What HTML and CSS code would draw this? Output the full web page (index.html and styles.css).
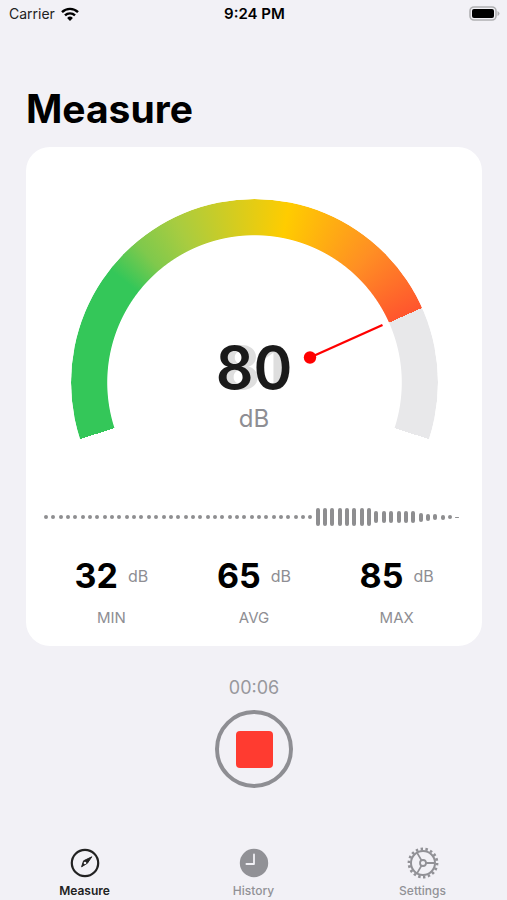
FILE: index.html
```html
<!DOCTYPE html>
<html lang="en">
<head>
<meta charset="UTF-8">
<meta name="viewport" content="width=device-width, initial-scale=1.0">
<title>Measure</title>
<link rel="stylesheet" href="styles.css">
</head>
<body>

<!-- Status bar -->
<div class="status-bar">
    <div class="carrier">
        <span>Carrier</span>
        <svg width="18" height="14" viewBox="0 0 18 14" aria-hidden="true">
            <g fill="none" stroke="#000" stroke-width="2.4">
                <path d="M1 5.2 A11.3 11.3 0 0 1 17 5.2"/>
                <path d="M4 8.4 A7.1 7.1 0 0 1 14 8.4"/>
            </g>
            <path d="M9 14 L6.1 11 A4.1 4.1 0 0 1 11.9 11 Z"/>
        </svg>
    </div>
    <div class="clock">9:24 PM</div>
    <svg class="battery" width="31" height="15" viewBox="0 0 31 15" aria-hidden="true">
        <rect x="1" y="1" width="26" height="13" rx="4" fill="none" stroke="#b0b0b2" stroke-width="1.6"/>
        <rect x="3" y="3" width="22" height="9" rx="2"/>
        <path d="M28.5 5 Q30.5 6 30.5 7.5 Q30.5 9 28.5 10 Z" fill="#b0b0b2"/>
    </svg>
</div>

<main class="container">
    <h1>Measure</h1>

    <section class="card">
        <div class="gauge">
            <div class="gauge-arc"></div>
            <svg class="needle" viewBox="0 0 367 241" aria-hidden="true">
                <path d="M239 158.5 L311.5 126" stroke="#f00" stroke-width="2.4"/>
                <circle cx="239" cy="158.5" r="6.2" fill="#f00"/>
            </svg>
            <div class="reading">
                <div class="level"><span class="level-old" aria-hidden="true"></span>80</div>
                <div class="level-unit">dB</div>
            </div>
        </div>

        <div class="wave" id="wave"></div>

        <div class="stats">
            <div class="stat">
                <div class="stat-value">32 <small>dB</small></div>
                <div class="stat-label">MIN</div>
            </div>
            <div class="stat">
                <div class="stat-value">65 <small>dB</small></div>
                <div class="stat-label">AVG</div>
            </div>
            <div class="stat">
                <div class="stat-value">85 <small>dB</small></div>
                <div class="stat-label">MAX</div>
            </div>
        </div>
    </section>

    <div class="timer">00:06</div>
    <button class="stop-button" type="button" aria-label="Stop"><span></span></button>
</main>

<!-- Tabs -->
<nav class="tab-bar">
    <a class="tab active" href="#measure">
        <svg width="32" height="32" viewBox="0 0 32 32" fill="none" stroke="currentColor" aria-hidden="true">
            <circle cx="16" cy="16" r="13.2" stroke-width="2.2"/>
            <path d="M22.8 9.8 L18.4 16.2 L12.6 19.8 L14.6 13.8 Z" fill="currentColor" stroke-width="1" stroke-linejoin="round"/>
            <circle cx="16" cy="16" r="1.3" fill="#f2f1f6" stroke="none"/>
        </svg>
        <span>Measure</span>
    </a>
    <a class="tab" href="#history">
        <svg width="32" height="32" viewBox="0 0 32 32" aria-hidden="true">
            <circle cx="16" cy="16" r="14.2" fill="currentColor"/>
            <path d="M16 7.4 V17 H8.4" fill="none" stroke="#f2f1f6" stroke-width="1.8" stroke-linecap="round" stroke-linejoin="round"/>
        </svg>
        <span>History</span>
    </a>
    <a class="tab" href="#settings">
        <svg width="32" height="32" viewBox="0 0 32 32" fill="none" stroke="currentColor" aria-hidden="true">
            <circle cx="16" cy="16" r="12" stroke-width="2"/>
            <circle cx="16" cy="16" r="14" stroke-width="2.8" pathLength="36" stroke-dasharray="1 1"/>
            <circle cx="16" cy="16" r="3" stroke-width="1.8"/>
            <path d="M19 16 H28 M14.5 13.4 L10 5.6 M14.5 18.6 L10 26.4" stroke-width="1.8"/>
        </svg>
        <span>Settings</span>
    </a>
</nav>

<script>
// Bar heights, oldest sample first
var levels = [];
for (var i = 0; i < 37; i++) {
    levels.push(4);
}
levels = levels.concat([18, 18, 18, 18, 18, 18, 18, 18, 12, 12, 12, 12, 12, 12, 9, 7, 6, 5, 4, 1]);

// Draw the waveform
var wave = document.getElementById('wave');
levels.forEach(function(level) {
    var bar = document.createElement('span');
    bar.style.height = level + 'px';
    wave.appendChild(bar);
});
</script>

</body>
</html>
```
FILE: styles.css
```css
* {
    box-sizing: border-box;
}

body {
    margin: 0;
    min-height: 100vh;
    display: flex;
    flex-direction: column;
    background-color: #f2f1f6;
    color: #000;
    font-family: Inter, "Liberation Sans", sans-serif;
}

/* Status bar */
.status-bar {
    display: grid;
    grid-template-columns: 1fr auto 1fr;
    align-items: center;
    height: 27px;
    padding: 0 7px 0 9px;
    font-size: 14px;
}

.carrier {
    display: flex;
    align-items: center;
    gap: 6px;
    color: #222;
}

.clock {
    font-size: 15px;
    font-weight: 600;
}

.battery {
    justify-self: end;
}

/* Main content */
.container {
    flex: 1;
    display: flex;
    flex-direction: column;
    padding: 57px 25px 0 26px;
}

h1 {
    margin: 0 0 13px;
    font-size: 39px;
    line-height: 50px;
    font-weight: 700;
}

.card {
    padding: 52px 14px 18px;
    border-radius: 24px;
    background-color: #fff;
}

/* Gauge */
.gauge {
    display: grid;
    grid-template-rows: 100%;
    width: 367px;
    max-width: 100%;
    aspect-ratio: 367 / 241;
    margin: 0 auto;
    overflow: hidden;
}

.gauge > * {
    grid-area: 1 / 1;
}

.gauge-arc {
    aspect-ratio: 1;
    align-self: start;
    border-radius: 50%;
    background: conic-gradient(from 252deg, #34c759 56deg, #7fc94c 68deg, #a8cc40 82deg, #ffcc00 119deg, #ff8e24 150deg, #ff552e 174deg, #e8e8ea 174deg 216deg, transparent 216deg);
    -webkit-mask: radial-gradient(closest-side, transparent 80%, #000 80.5%);
    mask: radial-gradient(closest-side, transparent 80%, #000 80.5%);
}

.needle {
    width: 100%;
}

.reading {
    align-self: end;
    text-align: center;
    z-index: 1;
}

.level {
    position: relative;
    color: #1a1a1a;
    font-size: 59px;
    line-height: 64px;
    font-weight: 600;
}

/* Previous value fading out behind the current one */
.level-old {
    position: absolute;
    inset: 0;
    z-index: -1;
    color: #dedede;
}

.level-old::before {
    content: "81";
}

.level-unit {
    padding: 4px 0 6px;
    color: #8e8e93;
    font-size: 24px;
    line-height: 30px;
}

/* Waveform */
.wave {
    display: flex;
    align-items: center;
    justify-content: space-between;
    height: 18px;
    margin: 68px 8px 0 4px;
}

.wave span {
    width: 4px;
    border-radius: 2px;
    background-color: #8e8e90;
}

/* Min, average and max */
.stats {
    display: grid;
    grid-template-columns: repeat(3, 1fr);
    margin-top: 30px;
    text-align: center;
}

.stat-value {
    display: flex;
    align-items: center;
    justify-content: center;
    gap: 10px;
    font-size: 34px;
    line-height: 40px;
    font-weight: 700;
}

.stat-value small {
    color: #8e8e93;
    font-size: 16px;
    font-weight: 400;
}

.stat-label {
    margin-top: 12px;
    color: #8e8e93;
    font-size: 15px;
    line-height: 20px;
}

/* Recording */
.timer {
    margin-top: 30px;
    color: #98989d;
    font-size: 18px;
    line-height: 24px;
    text-align: center;
}

.stop-button {
    display: flex;
    align-items: center;
    justify-content: center;
    align-self: center;
    width: 78px;
    height: 78px;
    margin: 10px 0 20px;
    padding: 0;
    border: 4px solid #8e8e93;
    border-radius: 50%;
    background: none;
    cursor: pointer;
}

.stop-button span {
    width: 37px;
    height: 37px;
    border-radius: 4px;
    background-color: #ff3b30;
}

/* Tab bar */
.tab-bar {
    display: grid;
    grid-template-columns: repeat(3, 1fr);
}

.tab {
    display: flex;
    flex-direction: column;
    align-items: center;
    gap: 4px;
    padding-bottom: 1px;
    color: #919196;
    font-size: 12px;
    line-height: 16px;
    font-weight: 500;
    text-decoration: none;
}

.tab.active {
    color: #222;
    font-weight: 600;
}
```
